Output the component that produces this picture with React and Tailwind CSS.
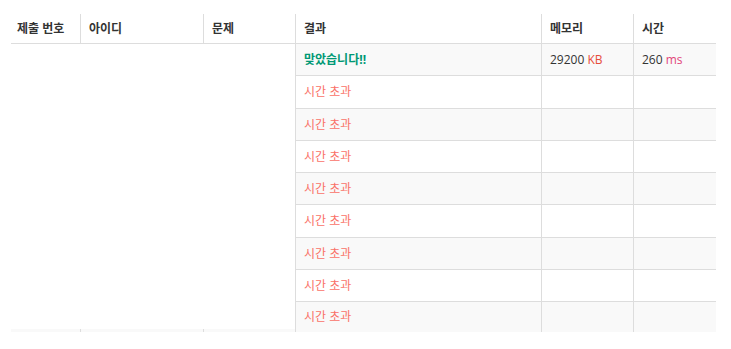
export default function App() {
  const rows = [
    { h: 'h-[31px]', bg: 'bg-[#f9f9f9]', ac: true },
    { h: 'h-[32px]', bg: 'bg-white' },
    { h: 'h-[31px]', bg: 'bg-[#f9f9f9]' },
    { h: 'h-[31px]', bg: 'bg-white' },
    { h: 'h-[31px]', bg: 'bg-[#f9f9f9]' },
    { h: 'h-[32px]', bg: 'bg-white' },
    { h: 'h-[31px]', bg: 'bg-[#f9f9f9]' },
    { h: 'h-[31px]', bg: 'bg-white' },
    { h: 'h-[30px]', bg: 'bg-[#f9f9f9]', last: true },
  ];
  return (
    <div
      className="w-[731px] h-[349px] bg-white pt-[14px] pl-[11px] text-[12px] text-[#333]"
      style={{ fontFamily: '"Open Sans", "Noto Sans CJK KR", sans-serif' }}
    >
      <div className="w-[705px]">
        {/* header */}
        <div className="flex h-[30px] border-b border-[#dddddd] font-bold">
          <div className="w-[69px] pl-[6px] flex items-center">제출 번호</div>
          <div className="w-[123px] pl-2 border-l border-[#dddddd] flex items-center">아이디</div>
          <div className="w-[92px] pl-2 border-l border-[#dddddd] flex items-center">문제</div>
          <div className="w-[246px] pl-2 border-l border-[#dddddd] flex items-center">결과</div>
          <div className="w-[92px] pl-2 border-l border-[#dddddd] flex items-center">메모리</div>
          <div className="w-[83px] pl-2 border-l border-[#dddddd] flex items-center">시간</div>
        </div>
        {/* body */}
        <div className="flex">
          <div className="w-[284px] flex flex-col">
            <div className="h-[285px] bg-white" />
            <div className="h-[3px] flex bg-[#f9f9f9]">
              <div className="w-[69px]" />
              <div className="w-[123px] border-l border-[#dddddd]" />
              <div className="w-[92px] border-l border-[#dddddd]" />
            </div>
          </div>
          <div className="w-[421px] border-l border-[#dddddd] flex flex-col">
            {rows.map((r, i) => (
              <div
                key={i}
                className={`flex ${r.h} ${r.bg} ${r.last ? '' : 'border-b border-[#dddddd]'} box-content`}
              >
                <div className="w-[245px] pl-2 flex items-center">
                  {r.ac ? (
                    <span className="font-bold text-[#009874]">맞았습니다!!</span>
                  ) : (
                    <span className="text-[#fa7268]">시간 초과</span>
                  )}
                </div>
                <div className="w-[92px] pl-2 border-l border-[#dddddd] flex items-center">
                  {r.ac && (
                    <span>
                      29200 <span className="text-[#e74c3c]">KB</span>
                    </span>
                  )}
                </div>
                <div className="w-[83px] pl-2 border-l border-[#dddddd] flex items-center">
                  {r.ac && (
                    <span>
                      260 <span className="text-[#e2457a]">ms</span>
                    </span>
                  )}
                </div>
              </div>
            ))}
          </div>
        </div>
      </div>
    </div>
  );
}
